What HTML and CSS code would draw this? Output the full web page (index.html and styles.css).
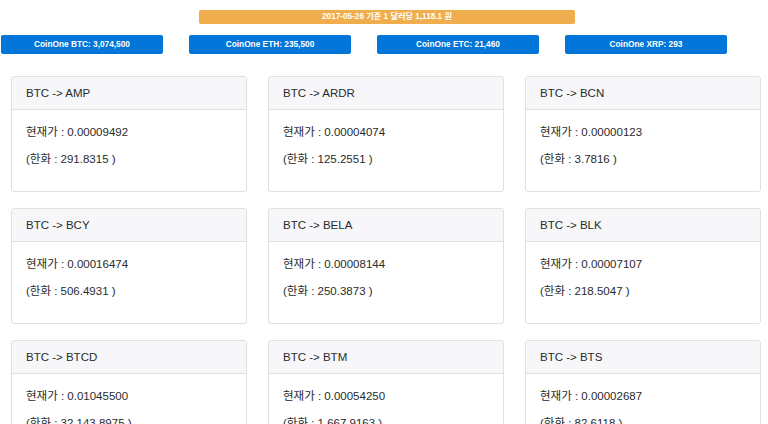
FILE: index.html
```html
<!DOCTYPE html>
<html lang="ko">
<head>
<meta charset="utf-8">
<title>CoinOne</title>
<link rel="stylesheet" href="styles.css">
</head>
<body>
<div class="page">
  <div class="rate">2017-05-26 기준 1 달러당 1,118.1 원</div>
  <div class="coins">
    <div class="coin">CoinOne BTC: 3,074,500</div>
    <div class="coin">CoinOne ETH: 235,500</div>
    <div class="coin">CoinOne ETC: 21,460</div>
    <div class="coin">CoinOne XRP: 293</div>
  </div>
  <div class="cards">
    <div class="card"><div class="card-header">BTC -&gt; AMP</div><div class="card-body"><p>현재가 : 0.00009492</p><p>(한화 : 291.8315 )</p></div></div>
    <div class="card"><div class="card-header">BTC -&gt; ARDR</div><div class="card-body"><p>현재가 : 0.00004074</p><p>(한화 : 125.2551 )</p></div></div>
    <div class="card"><div class="card-header">BTC -&gt; BCN</div><div class="card-body"><p>현재가 : 0.00000123</p><p>(한화 : 3.7816 )</p></div></div>
    <div class="card"><div class="card-header">BTC -&gt; BCY</div><div class="card-body"><p>현재가 : 0.00016474</p><p>(한화 : 506.4931 )</p></div></div>
    <div class="card"><div class="card-header">BTC -&gt; BELA</div><div class="card-body"><p>현재가 : 0.00008144</p><p>(한화 : 250.3873 )</p></div></div>
    <div class="card"><div class="card-header">BTC -&gt; BLK</div><div class="card-body"><p>현재가 : 0.00007107</p><p>(한화 : 218.5047 )</p></div></div>
    <div class="card"><div class="card-header">BTC -&gt; BTCD</div><div class="card-body"><p>현재가 : 0.01045500</p><p>(한화 : 32,143.8975 )</p></div></div>
    <div class="card"><div class="card-header">BTC -&gt; BTM</div><div class="card-body"><p>현재가 : 0.00054250</p><p>(한화 : 1,667.9163 )</p></div></div>
    <div class="card"><div class="card-header">BTC -&gt; BTS</div><div class="card-body"><p>현재가 : 0.00002687</p><p>(한화 : 82.6118 )</p></div></div>
  </div>
</div>
</body>
</html>
```
FILE: styles.css
```css
html, body {
  margin: 0;
  padding: 0;
  background: #fff;
}
body {
  font-family: "Liberation Sans", "Noto Sans CJK KR", sans-serif;
  color: #292b2c;
  overflow: hidden;
}
.page {
  padding-top: 10px;
}
.rate {
  margin-left: 199px;
  width: 376px;
  height: 14px;
  line-height: 14px;
  background: #f0ad4e;
  border-radius: 2px;
  color: #fff;
  font-size: 8.2px;
  font-weight: bold;
  text-align: center;
}
.coins {
  display: grid;
  grid-template-columns: repeat(4, 162px);
  column-gap: 26px;
  padding-left: 1px;
  margin-top: 11px;
}
.coin {
  height: 19px;
  line-height: 19px;
  background: #0275d8;
  border-radius: 2px;
  color: #fff;
  font-size: 8.3px;
  font-weight: bold;
  text-align: center;
}
.cards {
  display: grid;
  grid-template-columns: repeat(3, 236px);
  column-gap: 21px;
  row-gap: 16px;
  padding: 0 11px;
  margin-top: 22px;
}
.card {
  border: 1px solid #e0e0e0;
  border-radius: 3px;
  height: 116px;
  box-sizing: border-box;
  overflow: hidden;
}
.card-header {
  background: #f7f7f9;
  border-bottom: 1px solid #e0e0e0;
  height: 33px;
  box-sizing: border-box;
  padding: 0 14px;
  line-height: 33px;
  font-size: 11.5px;
}
.card-body {
  padding: 13px 14px 0;
  font-size: 11.5px;
}
.card-body p {
  margin: 0 0 8px;
  line-height: 19px;
}
```
